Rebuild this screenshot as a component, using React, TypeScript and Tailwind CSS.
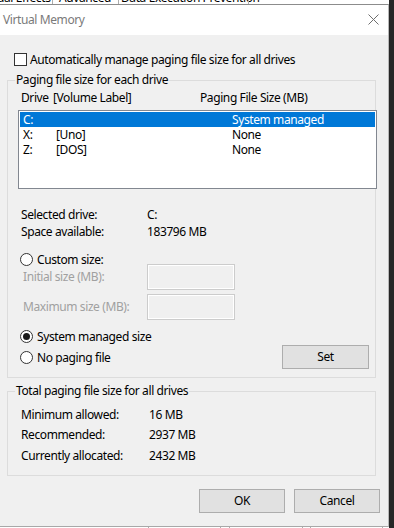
import React from 'react';

const drives = [
  { letter: 'C:', label: '', size: 'System managed', selected: true },
  { letter: 'X:', label: '[Uno]', size: 'None', selected: false },
  { letter: 'Z:', label: '[DOS]', size: 'None', selected: false },
];

const totals = [
  { label: 'Minimum allowed:', value: '16 MB', gap: 'mt-[8px]' },
  { label: 'Recommended:', value: '2937 MB', gap: 'mt-[4px]' },
  { label: 'Currently allocated:', value: '2432 MB', gap: 'mt-[5px]' },
];

function Radio({ checked, label }: { checked?: boolean; label: string }) {
  return (
    <div className="flex h-[13px] items-center">
      <span className="flex h-[13px] w-[13px] items-center justify-center rounded-full border border-[#333333] bg-white">
        {checked && <span className="h-[7px] w-[7px] rounded-full bg-[#1a1a1a]" />}
      </span>
      <span className="ml-[4px] whitespace-nowrap">{label}</span>
    </div>
  );
}

function WinButton({ label, className = '' }: { label: string; className?: string }) {
  return (
    <div
      className={`flex h-[24px] shrink-0 items-center justify-center border border-[#adadad] bg-[#e1e1e1] ${className}`}
    >
      {label}
    </div>
  );
}

export default function App() {
  return (
    <div className="flex h-[528px] w-[394px] overflow-hidden bg-white font-['Noto_Sans','Open_Sans',sans-serif] text-[12px] leading-[16px] tracking-[-0.4px] text-black">
      <div className="flex w-[389px] flex-col">
        {/* window behind: tab strip, cut off */}
        <div className="flex h-[4px] overflow-hidden whitespace-nowrap">
          <div className="-mt-[10px] flex h-[16px]">
            <span className="w-[55px] -ml-[3px]">ual Effects</span>
            <span className="w-px bg-[#adadad]" />
            <span className="w-[65px] pl-[6px]">Advanced</span>
            <span className="w-px bg-[#adadad]" />
            <span className="w-[129px] pl-[2px]">Data Execution Prevention</span>
            <span className="w-px bg-[#adadad]" />
          </div>
        </div>

        {/* dialog */}
        <div className="flex h-[523px] flex-col border-b border-r border-t border-b-[#a8a8a8] border-r-[#b8b8b8] border-t-[#8c8c8c]">
          <div className="flex h-[30px] shrink-0 items-center justify-between bg-white pl-[3px] pr-[9px]">
            <span className="text-[#7a7a7a]">Virtual Memory</span>
            <svg width="11" height="11" viewBox="0 0 11 11" className="mt-[-1px]">
              <path d="M0.5 0.5 L10.5 10.5 M10.5 0.5 L0.5 10.5" stroke="#6e6e6e" strokeWidth="1" fill="none" />
            </svg>
          </div>

          <div className="flex flex-1 flex-col bg-[#f0f0f0] pl-[7px] pr-[8px]">
            <div className="mt-[18px] flex h-[13px] items-center pl-[7px]">
              <span className="h-[13px] w-[13px] border border-[#333333] bg-white" />
              <span className="ml-[3px]">Automatically manage paging file size for all drives</span>
            </div>

            <fieldset className="mt-[6px] w-[369px] min-w-0 border border-[#dcdcdc] p-0">
              <legend className="ml-[7px] px-[1px] leading-[16px]">Paging file size for each drive</legend>
              <div className="flex flex-col pb-[8px] pr-[6px]">
                <div className="mt-[2px] flex pl-[13px]">
                  <span className="w-[32px]">Drive</span>
                  <span className="w-[147px]">[Volume Label]</span>
                  <span>Paging File Size (MB)</span>
                </div>

                <div className="ml-[10px] mt-[4px] h-[79px] w-[359px] shrink-0 border border-[#828790] bg-white p-[1px]">
                  {drives.map((d) => (
                    <div
                      key={d.letter}
                      className={`flex h-[15px] items-center leading-[15px] ${d.selected ? 'bg-[#0078d7] text-white' : ''}`}
                    >
                      <span className="w-[36px] pl-[3px]">{d.letter}</span>
                      <span className="w-[176px]">{d.label}</span>
                      <span>{d.size}</span>
                    </div>
                  ))}
                </div>

                <div className="mt-[18px] flex pl-[13px]">
                  <span className="w-[126px]">Selected drive:</span>
                  <span>C:</span>
                </div>
                <div className="mt-[1px] flex pl-[13px]">
                  <span className="w-[126px]">Space available:</span>
                  <span>183796 MB</span>
                </div>

                <div className="mt-[13px] pl-[12px]">
                  <Radio label="Custom size:" />
                </div>

                <div className="-mt-[2px] flex h-[26px] items-center pl-[15px] text-[#a0a0a0]">
                  <span className="w-[124px]">Initial size (MB):</span>
                  <span className="h-[26px] w-[88px] border border-[#cccccc] shadow-[inset_0_0_0_1px_#ffffff]" />
                </div>
                <div className="mt-[4px] flex h-[26px] items-center pl-[15px] text-[#a0a0a0]">
                  <span className="w-[124px]">Maximum size (MB):</span>
                  <span className="h-[26px] w-[88px] border border-[#cccccc] shadow-[inset_0_0_0_1px_#ffffff]" />
                </div>

                <div className="mt-[10px] flex justify-between pl-[12px]">
                  <div className="flex flex-col gap-[8px]">
                    <Radio checked label="System managed size" />
                    <Radio label="No paging file" />
                  </div>
                  <WinButton label="Set" className="mt-[15px] w-[87px]" />
                </div>
              </div>
            </fieldset>

            <fieldset className="mt-[5px] w-[369px] min-w-0 border border-[#dcdcdc] p-0">
              <legend className="ml-[7px] px-[1px] leading-[16px]">Total paging file size for all drives</legend>
              <div className="flex flex-col pb-[11px] pl-[13px]">
                {totals.map((t) => (
                  <div key={t.label} className={`flex ${t.gap}`}>
                    <span className="w-[128px]">{t.label}</span>
                    <span>{t.value}</span>
                  </div>
                ))}
              </div>
            </fieldset>

            <div className="mt-[13px] flex justify-end gap-[9px]">
              <WinButton label="OK" className="w-[86px]" />
              <WinButton label="Cancel" className="w-[86px]" />
            </div>
          </div>
        </div>

        {/* window behind: tops of its buttons */}
        <div className="flex h-[1px] pl-[148px]">
          <span className="w-[73px] border-x border-[#adadad]" />
          <span className="ml-[8px] w-[74px] border-x border-[#adadad]" />
          <span className="ml-[7px] w-[73px] border-x border-[#adadad]" />
        </div>
      </div>
      <div className="w-[5px] bg-[#262626]" />
    </div>
  );
}
